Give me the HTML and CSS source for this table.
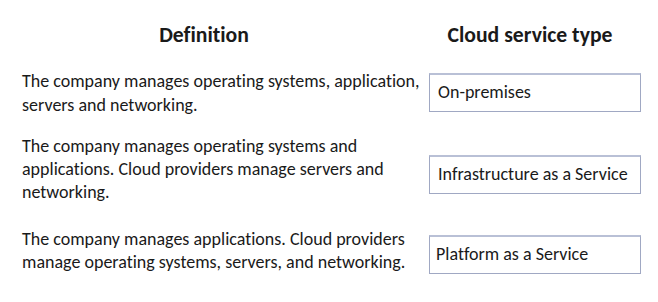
FILE: index.html
```html
<!DOCTYPE html>
<html>
<head>
<meta charset="utf-8">
<link rel="stylesheet" href="styles.css">
</head>
<body>
<div class="page">
  <div class="head">
    <div class="h-def">Definition</div>
    <div class="h-type">Cloud service type</div>
  </div>
  <div class="row r1">
    <p class="def">The company manages operating systems, application,<br>servers and networking.</p>
    <div class="box">On-premises</div>
  </div>
  <div class="row r2">
    <p class="def">The company manages operating systems and<br>applications. Cloud providers manage servers and<br>networking.</p>
    <div class="box">Infrastructure as a Service</div>
  </div>
  <div class="row r3">
    <p class="def">The company manages applications. Cloud providers<br>manage operating systems, servers, and networking.</p>
    <div class="box b3">Platform as a Service</div>
  </div>
</div>
</body>
</html>
```
FILE: styles.css
```css
html, body {
  margin: 0;
  padding: 0;
  background: #ffffff;
}
body {
  width: 658px;
  height: 302px;
  overflow: hidden;
  font-family: Carlito, Calibri, "Lato", "Liberation Sans", sans-serif;
  font-variant-ligatures: none;
  color: #1a1a1a;
}
.page {
  padding: 22px 0 0 22px;
  white-space: nowrap;
}
.head {
  display: flex;
  font-weight: bold;
  font-size: 21.7px;
  line-height: 26px;
}
.h-def {
  flex: 0 0 364px;
  text-align: center;
}
.h-type {
  flex: 0 0 288px;
  text-align: center;
}
.row {
  display: flex;
  align-items: flex-start;
  font-size: 18px;
  line-height: 23px;
}
.def {
  margin: 0;
  flex: 0 0 407px;
}
.r1 .def { line-height: 24px; }
.box {
  box-sizing: border-box;
  flex: 0 0 212px;
  height: 39px;
  border: 1px solid #a0a8c3;
  border-top: 2px solid #b9c0d6;
  display: flex;
  align-items: center;
  padding-left: 8px;
  padding-bottom: 1px;
}
.b3 { padding-left: 6px; }
.r1 { margin-top: 21px; }
.r1 .box { margin-top: 4px; }
.r2 { margin-top: 18px; }
.r2 .box { margin-top: 20px; }
.r3 { margin-top: 24px; }
.r3 .box { margin-top: 7px; }
```
